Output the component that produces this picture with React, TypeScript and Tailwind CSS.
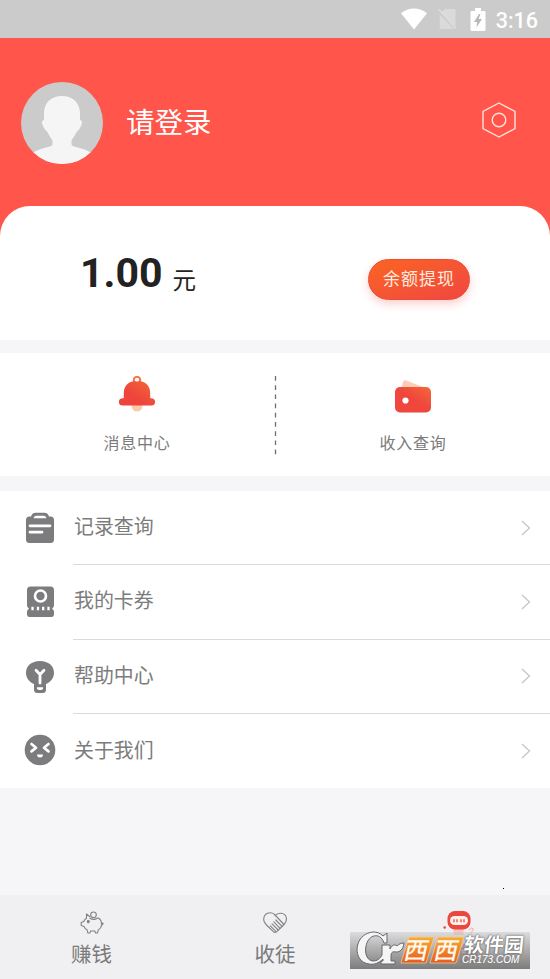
import type { ReactNode } from 'react';

type MenuItem = {
  label: string;
  icon: ReactNode;
};

function StatusBar() {
  return (
    <div className="flex h-[38px] items-center justify-end bg-[#cbcbcb] pr-3 text-white">
      <svg className="mr-[11px] h-[22px] w-[26px]" viewBox="0 0 26 22" fill="currentColor">
        <path d="M0 5.200C7.500-1.200 18.500-1.200 26 5.200L13 21.500Z" />
      </svg>
      <svg className="mr-[13px] h-[22px] w-[19px]" viewBox="0 0 19 22">
        <path d="M7 1h10.500v17.500L3 4.800ZM1.800 6.500 16 21H1.800Z" fill="#dadada" />
        <path d="m1 1.500 17 19" stroke="#dedede" strokeWidth="1.500" />
      </svg>
      <svg className="mr-[10px] h-[23px] w-[16px]" viewBox="0 0 16 23">
        <path d="M5 0h6v3h3.400q1.100 0 1.100 1.100v17.600q0 1.300-1.300 1.300H1.800Q.5 23 .5 21.700V4.100Q.5 3 1.600 3H5Z" fill="currentColor" />
        <path d="m9 6-5 8h3.200l-.8 5.500L12 11H8.600L10.400 6Z" fill="#b8b8b8" />
      </svg>
      <span className="pt-[3px] font-[Roboto] text-[21.500px] leading-[24px] font-medium">3:16</span>
    </div>
  );
}

function Avatar() {
  return (
    <svg className="mt-[2px] h-[82px] w-[82px]" viewBox="0 0 82 82">
      <defs>
        <clipPath id="avatar">
          <circle cx="41" cy="41" r="41" />
        </clipPath>
      </defs>
      <g clipPath="url(#avatar)">
        <path d="M0 0h82v82H0z" fill="#cbcbcb" />
        <path
          d="M41 14c-11 0-18 7-18 17v7c-2.500 0-2.500 3-1 6 1.500 3.500 3 4.500 4.500 6 1.500 4.500 5 7 5 9v3c0 2-2.500 2.500-6.500 3.500C19 67 15 68.500 10 72v13h62V72c-5-3.500-9-5-15-6.500-4-1-6.500-1.500-6.500-3.500v-3c0-2 3.500-4.500 5-9 1.500-1.500 3-2.500 4.500-6 1.500-3 1.500-6-1-6v-7c0-10-7-17-18-17Z"
          fill="#f5f5f5"
        />
      </g>
    </svg>
  );
}

function BellIcon() {
  return (
    <svg className="h-[36px] w-[36px]" viewBox="0 0 36 36">
      <defs>
        <linearGradient id="bell" x1="1" y1="0" x2=".4" y2=".6">
          <stop stopColor="#f36b35" />
          <stop offset="1" stopColor="#ef443d" />
        </linearGradient>
      </defs>
      <circle cx="18" cy="30" r="5.500" fill="#fbcba9" />
      <circle cx="18" cy="4" r="3.200" fill="none" stroke="#f37843" strokeWidth="2" />
      <path
        d="M18 4.800c8.500 0 13.200 5.200 13.200 12.500v5h1.300a3.600 3.600 0 0 1 0 7.200h-29a3.600 3.600 0 0 1 0-7.200h1.300v-5c0-7.300 4.700-12.500 13.200-12.500Z"
        fill="url(#bell)"
      />
      <ellipse cx="18" cy="4.500" rx="2" ry="1.100" fill="#fff" />
    </svg>
  );
}

function WalletIcon() {
  return (
    <svg className="h-[36px] w-[36px]" viewBox="0 0 36 36">
      <defs>
        <linearGradient id="wallet" x1="1" y1="0" x2=".3" y2=".8">
          <stop stopColor="#f5683a" />
          <stop offset=".65" stopColor="#ef463d" />
        </linearGradient>
      </defs>
      <path d="M6 10 8 3c.6-1.500 1.800-2 3.300-1.400L33 10Z" fill="#fcceb5" />
      <rect y="8" width="36" height="25.500" rx="5" fill="url(#wallet)" />
      <circle cx="10.500" cy="21.500" r="3.100" fill="#fff" />
    </svg>
  );
}

const menuItems: MenuItem[] = [
  {
    label: '记录查询',
    icon: (
      <svg className="h-[32px] w-[32px]" viewBox="0 0 32 32">
        <path d="M7 4.500Q8 .7 11.500.7h9Q24 .7 25 4.500h1.500Q30 4.500 30 8v19.500q0 3.500-3.500 3.500h-21Q2 31 2 27.500V8q0-3.500 3.500-3.500Z" fill="#7c7b7e" />
        <path d="M9.500 6.200Q10 3.700 12 3.700h8q2 0 2.500 2.500Z" fill="#fff" />
        <path d="M6 13.800h20M6 20.200h12" stroke="#fff" strokeWidth="2.800" strokeLinecap="round" />
      </svg>
    ),
  },
  {
    label: '我的卡券',
    icon: (
      <svg className="h-[32px] w-[32px]" viewBox="0 0 32 32">
        <path d="M6.500.5h20Q30 .5 30 4v15.500q0 1.500-2 3.200 2 1 2 3V28q0 3-2.500 3h-22Q3 31 3 28v-2.300q0-2 2-3-2-1.700-2-3.200V4Q3 .5 6.500.5Z" fill="#7c7b7e" />
        <circle cx="16.500" cy="10" r="5.500" fill="none" stroke="#fff" strokeWidth="2.600" />
        <path d="M8.500 20.800v3.400M14 20.800v3.400M19.200 20.800v3.400M24.500 20.800v3.400" stroke="#fff" strokeWidth="2.300" />
      </svg>
    ),
  },
  {
    label: '帮助中心',
    icon: (
      <svg className="h-[34px] w-[32px]" viewBox="0 0 32 34">
        <path d="M16 1C7.500 1 2 6 2 12.500c0 6 3.500 9.500 8 11.500v5.500Q10 33 13.500 33h5q3.500 0 3.500-3.500V24c4.500-2 8-5.500 8-11.500C30 6 24.500 1 16 1Z" fill="#7c7b7e" />
        <path d="m12 10.200 4 4.300 4-4.300M16 14.500V23" fill="none" stroke="#fff" strokeWidth="2.800" strokeLinecap="round" strokeLinejoin="round" />
        <path d="M13 27.300h6v1q-.3 1.600-2 1.600h-2q-1.700 0-2-1.600Z" fill="#fff" />
      </svg>
    ),
  },
  {
    label: '关于我们',
    icon: (
      <svg className="mb-[2px] h-[32px] w-[32px]" viewBox="0 0 32 32">
        <circle cx="16" cy="16" r="15.300" fill="#7c7b7e" />
        <path d="m7.500 10 4.500 3.700-4.500 3.700M24.500 10 20 13.700l4.500 3.700" fill="none" stroke="#fff" strokeWidth="2.700" strokeLinecap="round" strokeLinejoin="round" />
        <path d="M13 20.500h6q0 3-3 3t-3-3Z" fill="#fff" />
      </svg>
    ),
  },
];

function PiggyIcon() {
  return (
    <svg className="h-[24px] w-[24px]" viewBox="0 0 24 24" fill="none" stroke="#828284" strokeWidth="1.100" strokeLinecap="round" strokeLinejoin="round">
      <circle cx="13.500" cy="3.800" r="2.800" />
      <path d="M10 5.800 6.500 3v4.200Q4.500 8.500 3.800 10.500L1.200 11.500v3l2.800 1q1 2.400 3.200 3.500l.6 3h2l.8-2h4.200l.8 2h2l.6-3q3-1.800 3.500-5.200 0-4.600-3.200-6.800M10 7.300q4 2.400 7.500-.3M21.200 12l2 .3-1.500 2" />
      <ellipse cx="8.300" cy="10.500" rx=".9" ry="1.300" fill="#828284" />
    </svg>
  );
}

function HandsIcon() {
  return (
    <svg className="h-[22px] w-[24px]" viewBox="0 0 24 22" fill="none" stroke="#828284" strokeWidth="1.100" strokeLinecap="round" strokeLinejoin="round">
      <path d="M12.500 3.200C9-.6 1-.2.700 7.300c0 2.700 1.500 4.500 3.800 6.700l6 5.700q1.600 1.300 3.200 0l7.300-7.200C25 8.500 24 1.700 18.200 1.200c-3-.2-4.600.6-6.200 2.500" />
      <path d="m12.500 3.500 8.500 9M12.800 8l6.500 6.600M10.800 9.800l6.300 6.600M9 11.800l6.200 6.200M7.300 13.800l5.500 5.500" />
    </svg>
  );
}

function RobotIcon() {
  return (
    <svg className="h-[26px] w-[32px]" viewBox="0 0 32 26">
      <path d="M10.500 18h10v7h-10Z" fill="#fac4bd" />
      <rect x="4.500" y="1" width="23" height="18.500" rx="7.500" fill="#e9483f" />
      <rect x="7" y="6" width="18" height="9" rx="4.500" fill="#fff0ec" />
      <path d="M11 9.200v3M14 9.200v3M18 9.200v3M21 9.200v3" stroke="#e9483f" strokeWidth="1.300" />
      <circle cx="1.700" cy="17.500" r="1.300" fill="#e9483f" />
      <path d="m26 20 2.500-2q2.500 0 1.500 2.500L27.500 23" fill="none" stroke="#f5a7a0" />
    </svg>
  );
}

function Watermark() {
  return (
    <div className="absolute top-[932px] left-[350px] h-[37px] w-[180px] bg-linear-to-b from-[#c9c9ca80] to-[#777778f5]">
      <svg className="absolute -top-[2px] left-0 h-[40px] w-[180px]" viewBox="0 0 180 40">
        <defs>
          <linearGradient id="tile" x1="0" y1="0" x2="0" y2="1">
            <stop stopColor="#f7ad37" />
            <stop offset="1" stopColor="#e75b1e" />
          </linearGradient>
        </defs>
        <path
          d="M37 3v10h-3C32 7 28 5 24 6c-10 2-12 24-1 25 4 0 7-2 9-6V15h8v4c2-4 5-5 7-3 2-2 4-3 7-3-1 7-4 9-8 9-4-1-5 1-5 4v5h4v3H31v-3h2v-2c-4 4-9 6-14 5C2 32 3 4 23 2c4 0 7 1 10 4Z"
          fill="#f5f5f5"
          stroke="#67676a"
          strokeWidth="1"
        />
        <path d="M59 7h25l-8 26H51Z" fill="url(#tile)" stroke="#f9d39a" strokeWidth=".7" />
        <path d="M88 7h26l-8 26H80Z" fill="url(#tile)" stroke="#f9d39a" strokeWidth=".7" />
      </svg>
      <span className="absolute top-[5px] left-[55px] -skew-x-12 text-[24px] leading-[24px] font-medium tracking-[6px] whitespace-nowrap text-[#fff8ea]">西西</span>
      <span className="absolute top-0 left-[114px] -skew-x-6 text-[20px] leading-[24px] font-bold whitespace-nowrap text-white [text-shadow:0_0_2px_#555,0_0_1px_#555]">软件园</span>
      <span className="absolute top-[22px] left-[112px] font-['Liberation_Sans'] text-[10px] leading-[11px] whitespace-nowrap text-white italic [text-shadow:0_0_2px_#444,0_0_1px_#fff]">CR173.COM</span>
    </div>
  );
}

export default function App() {
  return (
    <div className="relative flex h-[979px] w-[550px] flex-col overflow-hidden bg-[#f6f6f8] font-['Noto_Sans_CJK_SC',sans-serif]">
      <StatusBar />

      <header className="bg-[#ff554a]">
        <div className="flex h-[168px] items-center pr-[34px] pl-[21px]">
          <Avatar />
          <h1 className="mb-[2px] ml-[23px] flex-1 text-[28.500px] leading-[36px] text-white">请登录</h1>
          <svg className="mb-1 h-[36px] w-[34px]" viewBox="0 0 34 36" fill="none" stroke="#ffe1dc" strokeWidth="1.400">
            <path d="M17 1 33 9.500v17L17 35 1 26.500v-17Z" />
            <circle cx="17" cy="18" r="6.800" />
          </svg>
        </div>
        <section className="flex h-[134px] items-center justify-between rounded-t-[30px] bg-white pr-[80px] pl-[80px]">
          <p className="flex items-baseline text-[#222]">
            <span className="font-[Roboto] text-[41px] leading-[48px] font-bold">1.00</span>
            <span className="relative top-[2px] ml-[10px] text-[23.500px] leading-[36px]">元</span>
          </p>
          <button className="mt-[12px] h-[41px] w-[102px] rounded-full border border-[#e94c38] bg-linear-to-br from-[#fb641e] to-[#f04640] pb-[2px] text-[17px] leading-[36px] tracking-[1px] text-[#ffeadd] shadow-[0_4px_8px_#f0464040]">
            余额提现
          </button>
        </section>
      </header>

      <section className="mt-[13px] flex h-[123px] bg-white text-[16px] leading-[24px] tracking-[0.700px] text-[#7a7a7a]">
        <div className="flex w-[274px] flex-col items-center pt-[23px]">
          <BellIcon />
          <span className="mt-[18px]">消息中心</span>
        </div>
        <svg className="mt-[23px] h-[79px] w-[3px]" viewBox="0 0 3 79">
          <path d="M1.500 0v79" stroke="#6e6e6e" strokeWidth="1.300" strokeDasharray="4.700 4.500" />
        </svg>
        <div className="flex w-[272px] flex-col items-center pt-[26px]">
          <WalletIcon />
          <span className="mt-[15px]">收入查询</span>
        </div>
      </section>

      <ul className="mt-[15px] h-[297px] bg-white">
        {menuItems.map(({ label, icon }, index) => (
          <li key={label} className="flex h-[74.300px] items-center pl-6">
            {icon}
            <div className={`ml-[17px] flex h-full flex-1 items-center justify-between pr-[19px] pl-px ${index < menuItems.length - 1 ? 'border-b border-[#dadada]' : ''}`}>
              <span className="pb-[3px] text-[19.900px] leading-[30px] text-[#7c7c7c]">{label}</span>
              <svg className="h-[16px] w-[10px]" viewBox="0 0 10 16" fill="none" stroke="#c5c5c5" strokeWidth="1.300">
                <path d="m1 1 7.500 7L1 15" />
              </svg>
            </div>
          </li>
        ))}
      </ul>

      <nav className="mt-auto flex h-[84px] bg-[#f0f0f2] text-[20.500px] leading-[30px] text-[#7a7a7a]">
        <div className="flex w-[183px] flex-col items-center pt-4">
          <PiggyIcon />
          <span className="mt-[3px]">赚钱</span>
        </div>
        <div className="flex w-[184px] flex-col items-center pt-[17px]">
          <HandsIcon />
          <span className="mt-[4px]">收徒</span>
        </div>
        <div className="flex w-[183px] flex-col items-center pt-[15px]">
          <RobotIcon />
          <span className="mt-[2px] text-[#ef5548]">我的</span>
        </div>
      </nav>
      <Watermark />
      <div className="absolute top-[888px] left-[503px] h-px w-px bg-black" />
    </div>
  );
}
